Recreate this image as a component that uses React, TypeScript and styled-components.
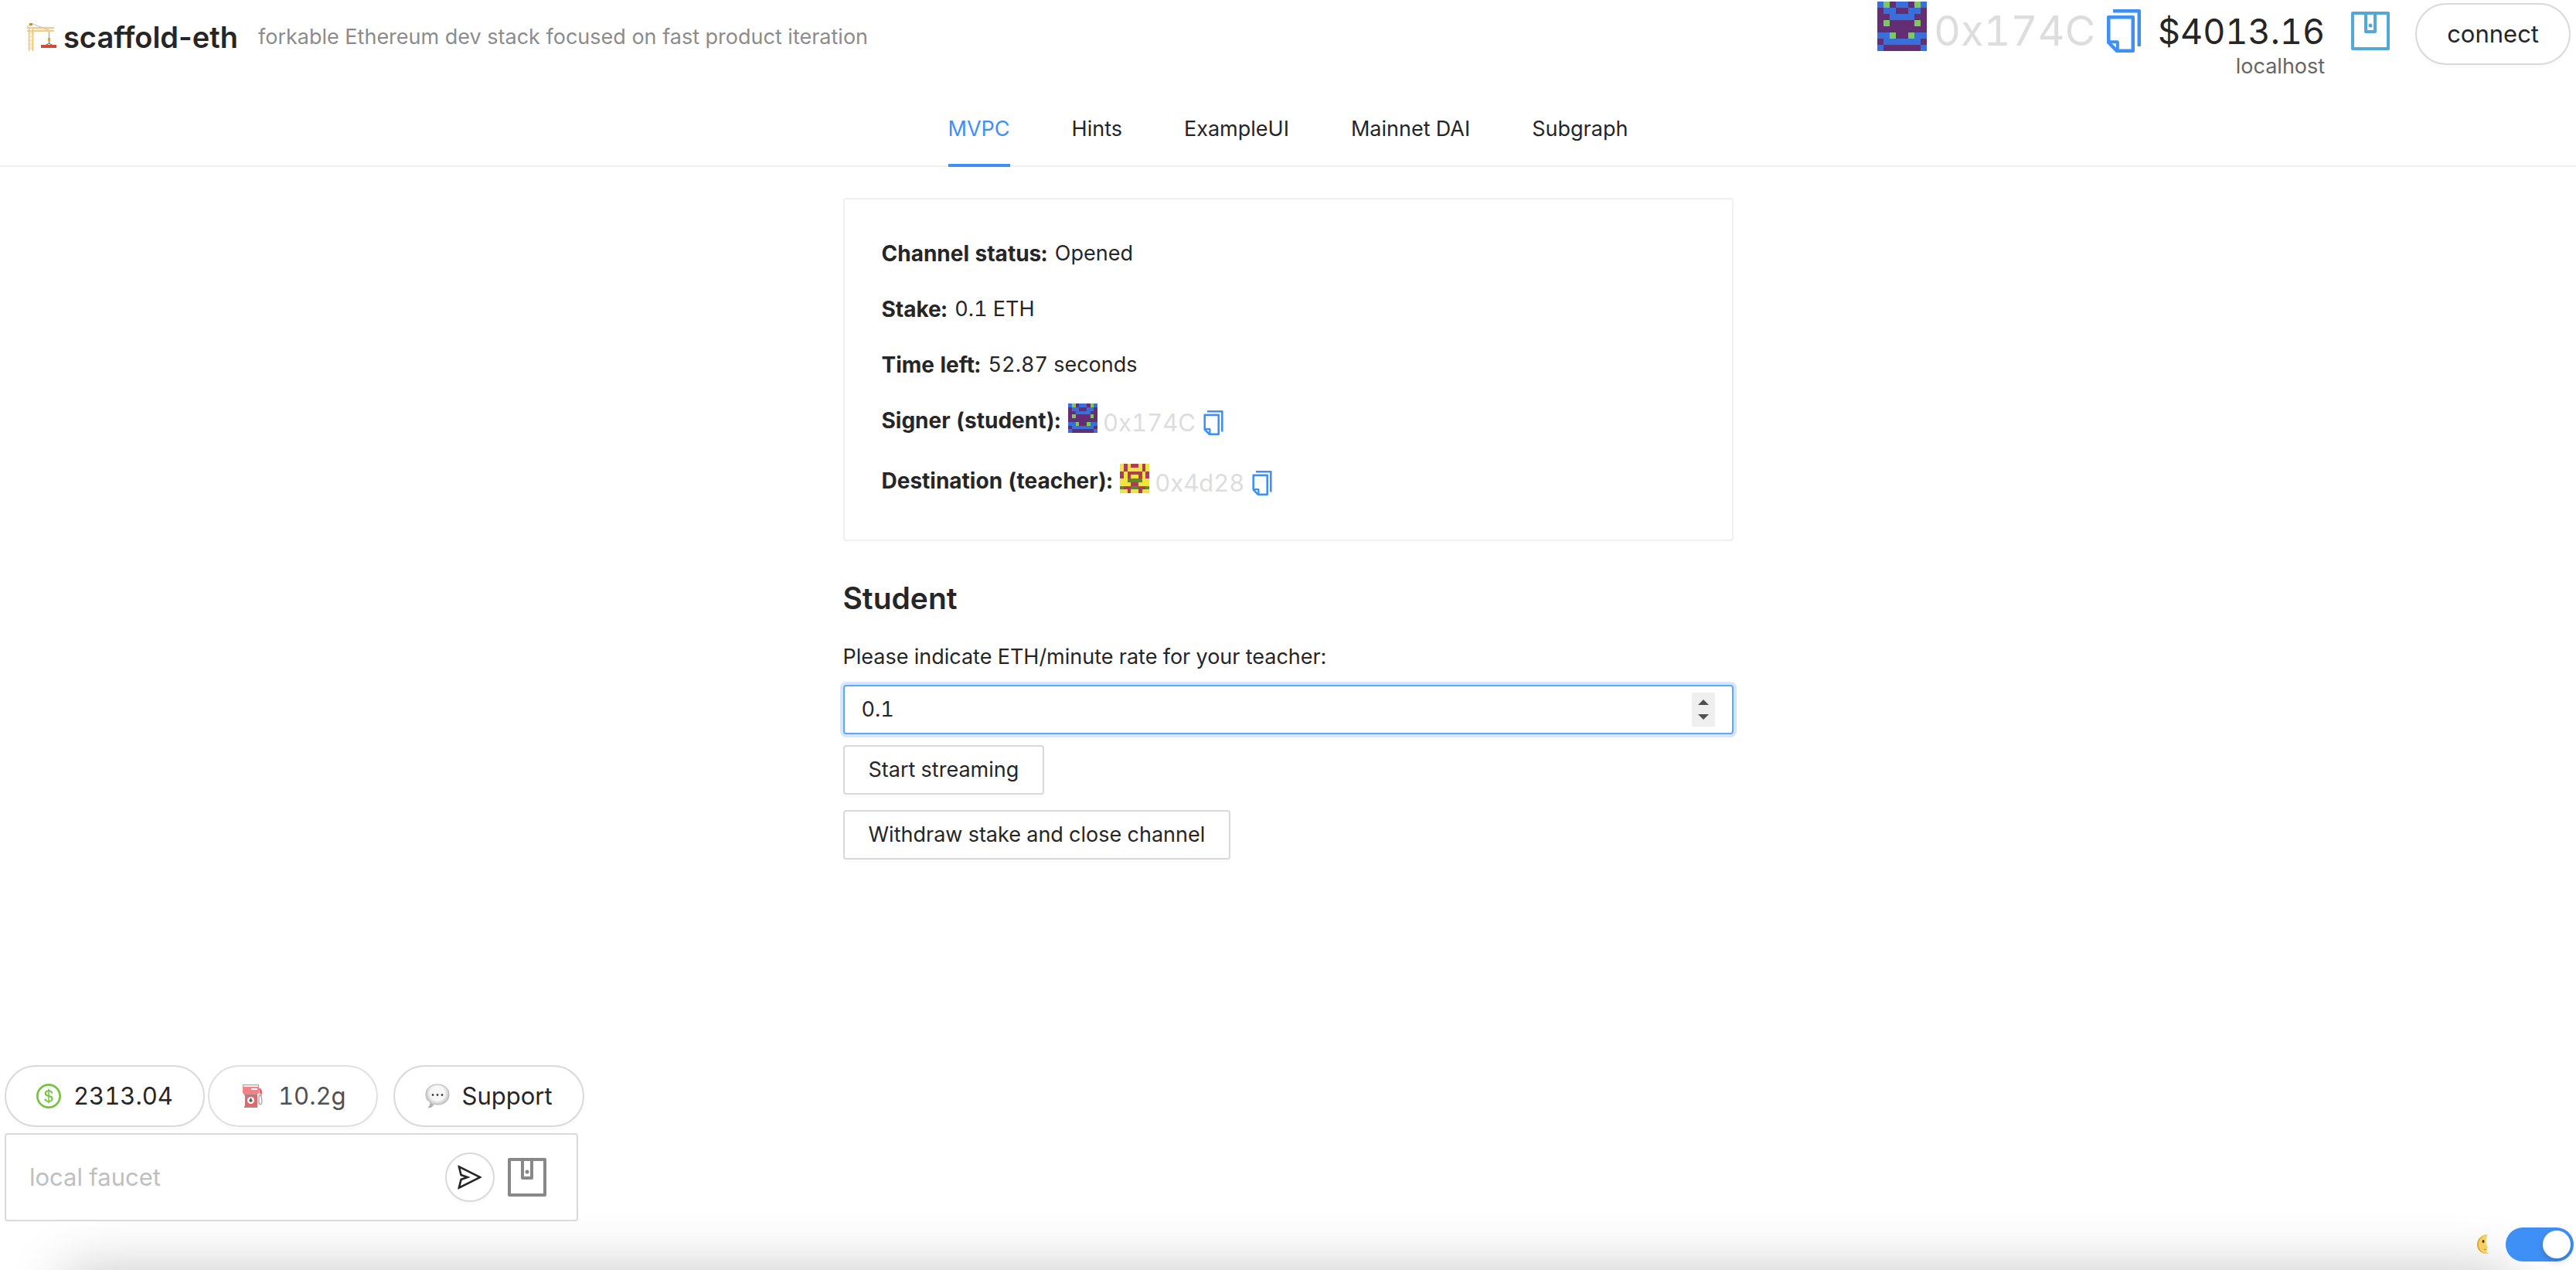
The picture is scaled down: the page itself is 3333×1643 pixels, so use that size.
import React, { useState } from "react";
import styled, { createGlobalStyle } from "styled-components";
import { AiOutlineCopy, AiOutlineDollar, AiOutlineSend } from "react-icons/ai";

const blue = "#3e90f7";
const ink = "#262626";
const line = "#d9d9d9";
const ANT_VIEW = "64 64 896 896";

const GlobalStyle = createGlobalStyle`
  *, *::before, *::after { box-sizing: border-box; }
  body {
    margin: 0;
    background: #fff;
    color: ${ink};
    font-family: Inter, Roboto, "Liberation Sans", sans-serif;
    font-size: 27px;
    line-height: 44px;
    font-variant-numeric: tabular-nums;
  }
  button, input { font: inherit; font-variant-numeric: inherit; color: inherit; }
  svg { display: block; flex: none; }
`;

const Page = styled.div`
  position: relative;
  display: flex;
  flex-direction: column;
  min-height: 100vh;
  overflow: hidden;
`;

const Header = styled.header`
  display: flex;
  justify-content: space-between;
  align-items: flex-start;
  height: 120px;
  padding-right: 7px;
`;

const Brand = styled.a`
  display: flex;
  align-items: center;
  height: 96px;
  padding-left: 34px;
  color: inherit;
  font-variant-numeric: normal;
  text-decoration: none;
`;

const BrandName = styled.span`
  margin-left: 8px;
  font-size: 38px;
  font-weight: 600;
`;

const Tagline = styled.span`
  margin-left: 26px;
  color: #8c8c8c;
`;

const Account = styled.div`
  display: flex;
  align-items: flex-start;
`;

const AddressBox = styled.span<{ $large?: boolean }>`
  display: flex;
  align-items: center;
  gap: ${(p) => (p.$large ? 9 : 7)}px;
  height: ${(p) => (p.$large ? 80 : 50)}px;
  font-size: ${(p) => (p.$large ? 54 : 31)}px;
  color: #ddd;
`;

const Blockie = styled.svg<{ $size: number }>`
  align-self: flex-start;
  width: ${(p) => p.$size}px;
  height: ${(p) => p.$size}px;
  margin-top: ${(p) => (p.$size > 50 ? 2 : 0)}px;
`;

const CopyButton = styled.button`
  display: flex;
  padding: 0;
  border: 0;
  background: none;
  color: ${blue};
`;

const Balance = styled.div`
  display: flex;
  flex-direction: column;
  align-items: flex-end;
  margin: 8px 31px 0 16px;
`;

const Amount = styled.span`
  font-size: 45px;
  line-height: 66px;
`;

const Network = styled.span`
  color: #666;
  line-height: 24px;
`;

const WalletButton = styled.button<{ $color: string }>`
  display: flex;
  padding: 3px;
  border: 0;
  background: none;
  color: ${(p) => p.$color};
`;

const AccountActions = styled.div`
  display: flex;
  align-items: flex-start;
  gap: 30px;
  padding-top: 4px;
  & > ${WalletButton} { margin-top: 8px; }
`;

const Pill = styled.button<{ $faded?: boolean }>`
  display: flex;
  align-items: center;
  gap: 16px;
  height: 80px;
  padding: 0 39px;
  border: 2px solid ${line};
  border-radius: 40px;
  background: #fff;
  box-shadow: 0 4px 0 rgba(0, 0, 0, 0.016);
  font-size: 31px;
  opacity: ${(p) => (p.$faded ? 0.8 : 1)};
`;

const Tabs = styled.nav`
  display: flex;
  justify-content: center;
  gap: 80px;
  height: 96px;
  border-bottom: 2px solid #f0f0f0;
`;

const Tab = styled.a<{ $active?: boolean }>`
  height: 96px;
  padding-top: 25px;
  border-bottom: 4px solid ${(p) => (p.$active ? blue : "transparent")};
  color: ${(p) => (p.$active ? blue : ink)};
  text-decoration: none;
`;

const Main = styled.main`
  width: 100%;
  max-width: 1152px;
  margin: 40px auto 0;
`;

const Card = styled.section`
  display: flex;
  flex-direction: column;
  gap: 28px;
  padding: 48px;
  border: 2px solid #f0f0f0;
  border-radius: 4px;
`;

const Fact = styled.div`
  display: flex;
  gap: 10px;
`;

const Term = styled.strong`
  font-size: 28px;
  font-weight: 700;
`;

const Title = styled.h2`
  margin: 46px 0 26px;
  font-size: 39px;
  font-weight: 600;
  line-height: 56px;
`;

const RateForm = styled.form`
  display: flex;
  flex-direction: column;
  align-items: flex-start;
`;

const NumberBox = styled.div`
  display: flex;
  align-items: center;
  width: 100%;
  height: 64px;
  margin: 14px 0;
  padding: 0 22px;
  border: 2px solid #5aa7fd;
  border-radius: 4px;
  box-shadow: 0 0 0 4px #d8e6fd;
`;

const NumberInput = styled.input`
  flex: 1;
  min-width: 0;
  padding: 0;
  border: 0;
  outline: 0;
  background: none;
  appearance: textfield;
  &::-webkit-inner-spin-button { appearance: none; margin: 0; }
`;

const Stepper = styled.div`
  display: flex;
  flex-direction: column;
  width: 30px;
  height: 44px;
  border-radius: 2px;
  background: #efefef;
`;

const Step = styled.button<{ $up?: boolean }>`
  display: flex;
  flex: 1;
  flex-direction: column;
  justify-content: ${(p) => (p.$up ? "flex-end" : "flex-start")};
  align-items: center;
  padding: 6px 0;
  border: 0;
  background: none;
  color: #505050;
`;

const Action = styled.button`
  height: 64px;
  margin-bottom: 20px;
  padding: 0 31px;
  border: 2px solid ${line};
  border-radius: 4px;
  background: #fff;
  box-shadow: 0 4px 0 rgba(0, 0, 0, 0.016);
`;

const Footer = styled.footer`
  display: flex;
  justify-content: space-between;
  align-items: flex-end;
  margin-top: auto;
  z-index: 1;
`;

const Tools = styled.div`
  display: flex;
  flex-direction: column;
  align-items: flex-start;
  gap: 8px;
  padding: 0 0 63px 6px;
`;

const PillRow = styled.div`
  display: flex;
  gap: 4px;
  & > :last-child { margin-left: 16px; }
`;

const Faucet = styled.form`
  display: flex;
  align-items: center;
  width: 742px;
  height: 114px;
  padding: 0 36px 0 30px;
  border: 2px solid ${line};
  border-radius: 4px;
  background: #fff;
`;

const FaucetInput = styled.input`
  flex: 1;
  min-width: 0;
  padding: 0;
  border: 0;
  outline: 0;
  background: none;
  font-size: 31px;
  &::placeholder { color: #bfbfbf; opacity: 1; }
`;

const SendButton = styled.button`
  display: flex;
  justify-content: center;
  align-items: center;
  width: 64px;
  height: 64px;
  margin-right: 14px;
  padding: 0;
  border: 2px solid ${line};
  border-radius: 50%;
  background: #fff;
  box-shadow: 0 4px 0 rgba(0, 0, 0, 0.016);
`;

const ThemeToggle = styled.label`
  display: flex;
  align-items: center;
  gap: 20px;
  padding: 0 3px 11px 0;
`;

const Switch = styled.input`
  display: flex;
  width: 88px;
  height: 44px;
  margin: 0;
  padding: 4px;
  border-radius: 22px;
  background: #bfbfbf;
  appearance: none;
  &::before {
    content: "";
    width: 36px;
    height: 36px;
    border-radius: 50%;
    background: #fff;
    box-shadow: 0 4px 8px rgba(0, 35, 11, 0.2);
  }
  &:checked { justify-content: flex-end; background: ${blue}; }
`;

/* Soft glow rising from below the fold, behind the footer */
const BottomShade = styled.div`
  position: absolute;
  top: 100%;
  left: 84px;
  right: 84px;
  height: 200px;
  box-shadow: 0 0 72px rgba(0, 0, 0, 0.22);
`;

const signerPixels = [
  "bgpbbpgb",
  "pbbppbbp",
  "ppbbbbpp",
  "pgppppgp",
  "pppppppp",
  "bbgppgbb",
  "pbbbbbbp",
  "bppppppb",
];
const teacherPixels = [
  "yryrryry",
  "yryyyyry",
  "ryrrrryr",
  "ryryyryr",
  "yyggggyy",
  "yyyrryyy",
  "grrggrrg",
  "yyryyryy",
];
const signerColors = { b: "#386fdb", g: "#7ec95f", p: "#642e74" };
const teacherColors = { y: "#efe442", r: "#ad3c55", g: "#5a8a2c" };

type AddressProps = {
  text: string;
  pixels: string[];
  colors: Record<string, string>;
  large?: boolean;
};

function Address({ text, pixels, colors, large }: AddressProps) {
  return (
    <AddressBox $large={large}>
      <Blockie $size={large ? 64 : 38} viewBox="0 0 8 8" shapeRendering="crispEdges" aria-hidden>
        {pixels.flatMap((row, y) =>
          row.split("").map((c, x) => (
            <rect key={`${x}-${y}`} x={x} y={y} width="1" height="1" fill={colors[c]} />
          ))
        )}
      </Blockie>
      {text}
      <CopyButton type="button" aria-label={`Copy ${text}`}>
        <AiOutlineCopy size={large ? 56 : 32} viewBox={ANT_VIEW} />
      </CopyButton>
    </AddressBox>
  );
}

const WalletIcon = () => (
  <svg width="50" height="50" viewBox="0 0 50 50" fill="none" stroke="currentColor" strokeWidth="4" strokeLinejoin="round">
    <rect x="2" y="2" width="46" height="46" />
    <path d="M19 3v23h12V3" />
    <circle cx="25" cy="18" r="2.5" fill="currentColor" stroke="none" />
  </svg>
);

const CraneIcon = () => (
  <svg width="40" height="40" viewBox="0 0 40 40" fill="none">
    <path d="M1 7l5-5 23 9" stroke="#b9bcc0" strokeWidth="1" />
    <path d="M3.500 9v29M8.500 9v29M1 8h35M1 12h35" stroke="#eebd62" strokeWidth="1.400" />
    <path d="M3.500 12l5 5-5 5 5 5-5 5 5 5M8.500 12l-5 5 5 5-5 5 5 5-5 5M10 8l3 4 3-4 3 4 3-4 3 4 3-4 3 4 3-4" stroke="#f3cf86" strokeWidth="1" />
    <path d="M4 2h4v3H4z" fill="#b79140" />
    <path d="M29.500 13v9" stroke="#a9adb2" strokeWidth="1.400" />
    <path d="M28 21h3v4h-3z" fill="#dca63c" />
    <path d="M29.500 25v3l-7 4M29.500 28l7 4" stroke="#777" strokeWidth="1.200" />
    <path d="M19 30h20v4H19z" fill="#c94f3c" />
  </svg>
);

const PumpIcon = () => (
  <svg width="34" height="32" viewBox="-4 0 34 32" fill="none">
    <path d="M22 7l2 3v8M21 26v-9c0-3 3-3 3 0l1 5c0 6-4 6-4 1" stroke="#8b8b8b" strokeWidth="1.300" />
    <path d="M21 6h2l2 3v4h-3z" fill="#d8484f" />
    <path d="M3 13h16v16H3z" fill="#d5444c" />
    <path d="M0 3h21v9l-2 2H2l-2-2z" fill="#f0646a" />
    <path d="M0 1h21v2H0z" fill="#8c8c8c" />
    <path d="M1 2h19v2H1z" fill="#eee" />
    <path d="M11 6h8v2h-8z" fill="#fff" />
    <path d="M2 14h17v1H2zM2 29h17v2H2z" fill="#777" />
    <circle cx="10.500" cy="21.500" r="4.500" fill="#fff" />
    <path d="M10.500 18l2 3.500c.5 3-4.500 3-4 0z" fill="#333" />
  </svg>
);

const SpeechIcon = () => (
  <svg width="32" height="32" viewBox="0 0 32 32">
    <defs>
      <radialGradient id="bubble" cx="50%" cy="38%" r="62%">
        <stop offset="50%" stopColor="#f8f8f8" />
        <stop offset="100%" stopColor="#a4a4a4" />
      </radialGradient>
    </defs>
    <path d="M16 1C7 1 1 6 1 14c0 5 2 8 6 10 0 3-1 5-3 7 4 0 6-2 8-5l4 1c9 0 15-5 15-13S25 1 16 1z" fill="url(#bubble)" stroke="#b5b5b5" />
    <circle cx="10" cy="14.500" r="1.400" fill="#444" />
    <circle cx="16" cy="14.500" r="1.400" fill="#444" />
    <circle cx="22" cy="14.500" r="1.400" fill="#444" />
  </svg>
);

const MoonIcon = () => (
  <svg width="18" height="28" viewBox="0 0 18 28">
    <path d="M15 1C7 1 1 7 1 14s6 13 16 12c-2-1-4-2-4-4 2-1 1-2 1-3 2-2 0-3-1-5-1-5 0-10 2-13z" fill="#f5d061" />
    <path d="M13 1C5 3 1 8 1 14s4 11 11 12C6 24 3 19 3 14S6 4 13 1z" fill="#dda93a" />
    <ellipse cx="9" cy="10" rx="1.500" ry="2" fill="#4b3a22" />
    <path d="M10 20c1 1 2 1 3 0" stroke="#b67a2a" fill="none" />
  </svg>
);

const tabs = ["MVPC", "Hints", "ExampleUI", "Mainnet DAI", "Subgraph"];

export default function App() {
  const [rate, setRate] = useState(0.1);
  const [dark, setDark] = useState(true);
  const step = (by: number) => setRate((r) => Math.round((r + by) * 10) / 10);

  return (
    <Page>
      <GlobalStyle />
      <BottomShade />
      <Header>
        <Brand href="#">
          <CraneIcon />
          <BrandName>scaffold-eth</BrandName>
          <Tagline>forkable Ethereum dev stack focused on fast product iteration</Tagline>
        </Brand>
        <Account>
          <Address text="0x174C" pixels={signerPixels} colors={signerColors} large />
          <Balance>
            <Amount>$4013.16</Amount>
            <Network>localhost</Network>
          </Balance>
          <AccountActions>
            <WalletButton type="button" $color="#53a8d8" aria-label="Wallet">
              <WalletIcon />
            </WalletButton>
            <Pill type="button">connect</Pill>
          </AccountActions>
        </Account>
      </Header>

      <Tabs>
        {tabs.map((name, i) => (
          <Tab key={name} href="#" $active={i === 0}>{name}</Tab>
        ))}
      </Tabs>

      <Main>
        <Card>
          <Fact><Term>Channel status:</Term>Opened</Fact>
          <Fact><Term>Stake:</Term>0.1 ETH</Fact>
          <Fact><Term>Time left:</Term>52.87 seconds</Fact>
          <Fact>
            <Term>Signer (student):</Term>
            <Address text="0x174C" pixels={signerPixels} colors={signerColors} />
          </Fact>
          <Fact>
            <Term>Destination (teacher):</Term>
            <Address text="0x4d28" pixels={teacherPixels} colors={teacherColors} />
          </Fact>
        </Card>

        <Title>Student</Title>
        <RateForm onSubmit={(e) => e.preventDefault()}>
          <label htmlFor="rate">Please indicate ETH/minute rate for your teacher:</label>
          <NumberBox>
            <NumberInput
              id="rate"
              type="number"
              step="0.1"
              value={rate}
              onChange={(e) => setRate(Number(e.target.value))}
            />
            <Stepper>
              <Step type="button" $up aria-label="Increase" onClick={() => step(0.1)}>
                <svg width="14" height="7" viewBox="0 0 14 7"><path d="M0 7l7-7 7 7z" fill="currentColor" /></svg>
              </Step>
              <Step type="button" aria-label="Decrease" onClick={() => step(-0.1)}>
                <svg width="14" height="7" viewBox="0 0 14 7"><path d="M0 0l7 7 7-7z" fill="currentColor" /></svg>
              </Step>
            </Stepper>
          </NumberBox>
          <Action type="submit">Start streaming</Action>
          <Action type="button">Withdraw stake and close channel</Action>
        </RateForm>
      </Main>

      <Footer>
        <Tools>
          <PillRow>
            <Pill type="button">
              <AiOutlineDollar size={32} viewBox={ANT_VIEW} color="#73c440" />
              2313.04
            </Pill>
            <Pill type="button" $faded><PumpIcon />10.2g</Pill>
            <Pill type="button"><SpeechIcon />Support</Pill>
          </PillRow>
          <Faucet onSubmit={(e) => e.preventDefault()}>
            <FaucetInput placeholder="local faucet" aria-label="local faucet" />
            <SendButton type="submit" aria-label="Send">
              <AiOutlineSend size={32} viewBox={ANT_VIEW} />
            </SendButton>
            <WalletButton type="button" $color="#888" aria-label="Wallet">
              <WalletIcon />
            </WalletButton>
          </Faucet>
        </Tools>
        <ThemeToggle>
          <MoonIcon />
          <Switch
            type="checkbox"
            role="switch"
            aria-label="Dark mode"
            checked={dark}
            onChange={(e) => setDark(e.target.checked)}
          />
        </ThemeToggle>
      </Footer>
    </Page>
  );
}
